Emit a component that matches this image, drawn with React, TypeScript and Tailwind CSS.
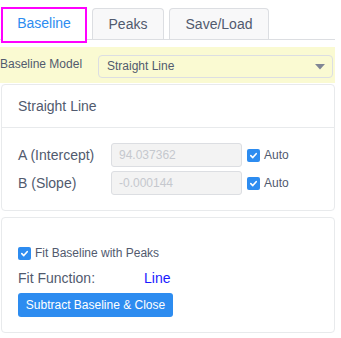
import React from "react";

function Check() {
  return (
    <span className="flex h-[13px] w-[13px] shrink-0 items-center justify-center rounded-[2px] bg-[#2d8cf0]">
      <svg width="9" height="9" viewBox="0 0 10 10">
        <path d="M2 5.2 L4.2 7.3 L8 3" fill="none" stroke="white" strokeWidth="1.8" strokeLinecap="round" strokeLinejoin="round" />
      </svg>
    </span>
  );
}

function ParamRow({ label, value }: { label: string; value: string }) {
  return (
    <div className="flex h-[24px] items-center">
      <span className="w-[93px] text-[14px]">{label}</span>
      <div className="flex h-[24px] w-[131px] items-center rounded-[3px] border border-[#dcdee2] bg-[#f3f3f3] pl-[7px] text-[12px] text-[#c5c8ce]">
        {value}
      </div>
      <div className="ml-[5px] flex items-center gap-[4px] text-[12px]">
        <Check />
        <span>Auto</span>
      </div>
    </div>
  );
}

export default function App() {
  return (
    <div className="relative h-[338px] w-[341px] bg-white text-[#515a6e]" style={{ fontFamily: '"Liberation Sans", Arial, sans-serif' }}>
      <span className="absolute left-[2px] top-[16px] h-[2px] w-[2px] bg-[#333]" />

      {/* Tabs */}
      <div className="flex h-[40px] w-[335px] items-end gap-[5px] border-b border-[#dcdee2]">
        <div className="relative z-10 ml-[1px] flex h-[36px] w-[86px] self-start mt-[7px] items-center justify-center border-2 border-[#ff00ff] bg-white pb-[3px] text-[14px] text-[#2d8cf0]">
          Baseline
        </div>
        <div className="flex h-[31px] w-[72px] items-center justify-center rounded-t-[4px] border border-b-0 border-[#dcdee2] bg-[#f8f8f9] text-[14px]">
          Peaks
        </div>
        <div className="flex h-[31px] w-[100px] items-center justify-center rounded-t-[4px] border border-b-0 border-[#dcdee2] bg-[#f8f8f9] text-[14px]">
          Save/Load
        </div>
      </div>

      {/* Model selector */}
      <div className="mt-[7px] flex h-[36px] w-[335px] items-center bg-[#fafad2]">
        <span className="w-[98px] text-[12px] pb-[2px]">Baseline Model</span>
        <div className="relative mt-[2px] flex h-[23px] w-[235px] items-center rounded-[4px] border border-[#dcdee2] pl-[8px] text-[12px]">
          Straight Line
          <svg className="absolute right-[7px] top-[8px]" width="10" height="6" viewBox="0 0 10 6">
            <path d="M0 0 L10 0 L5 5.5 Z" fill="#808695" />
          </svg>
        </div>
      </div>

      {/* Parameters card */}
      <div className="ml-[1px] mt-[1px] w-[334px] rounded-[4px] border border-[#e8eaec]">
        <div className="flex h-[43px] items-center border-b border-[#e8eaec] pl-[16px] text-[14px]">
          Straight Line
        </div>
        <div className="flex flex-col gap-[4px] px-[16px] pb-[15px] pt-[15px]">
          <ParamRow label="A (Intercept)" value="94.037362" />
          <ParamRow label="B (Slope)" value="-0.000144" />
        </div>
      </div>

      {/* Fit card */}
      <div className="ml-[1px] mt-[6px] w-[334px] rounded-[4px] border border-[#e8eaec] px-[16px] pb-[15px] pt-[26px]">
        <div className="flex h-[18px] items-center gap-[4px] text-[12px]">
          <Check />
          <span>Fit Baseline with Peaks</span>
        </div>
        <div className="mt-[6px] flex h-[20px] items-center text-[14px]">
          <span className="w-[126px]">Fit Function:</span>
          <span className="text-[#1a1aff]">Line</span>
        </div>
        <button className="mt-[5px] flex h-[24px] w-[155px] items-center justify-center rounded-[3px] bg-[#2d8cf0] text-[12px] text-white">
          Subtract Baseline &amp; Close
        </button>
      </div>
    </div>
  );
}
